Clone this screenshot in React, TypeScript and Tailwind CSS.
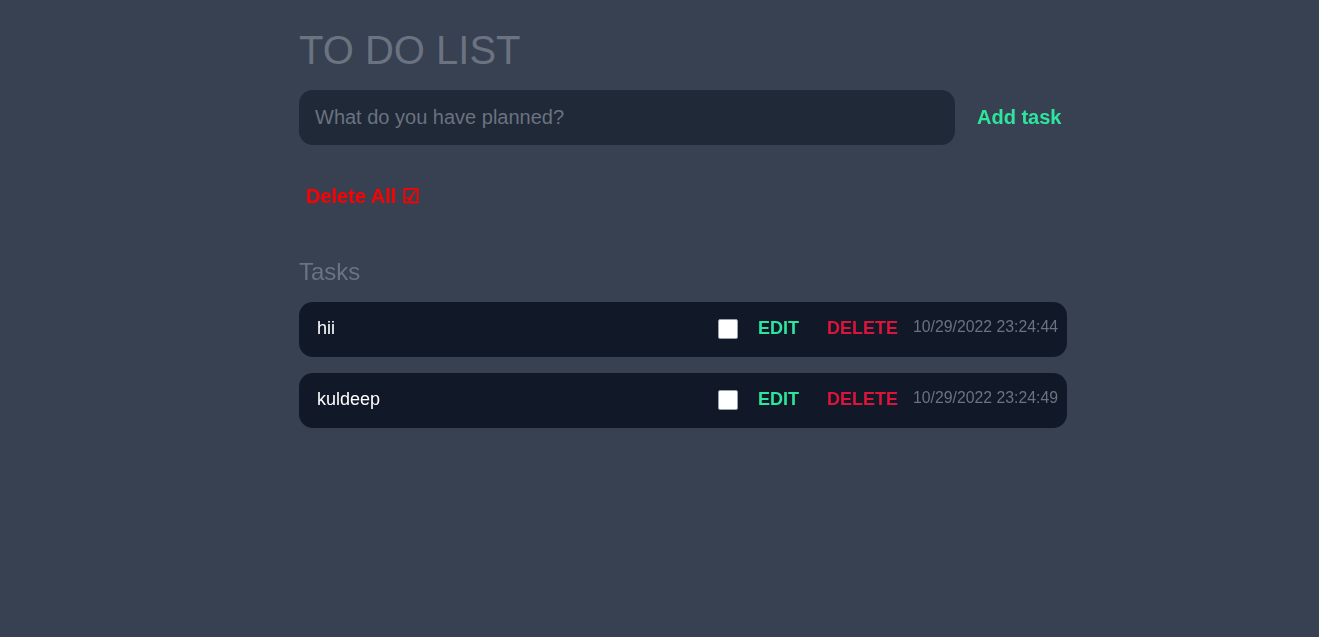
import React, { useState } from 'react';

interface Task {
  id: number;
  text: string;
  createdAt: string;
  done: boolean;
}

const INITIAL_TASKS: Task[] = [
  { id: 1, text: 'hii', createdAt: '10/29/2022 23:24:44', done: false },
  { id: 2, text: 'kuldeep', createdAt: '10/29/2022 23:24:49', done: false },
];

function TaskRow({ task, onToggle, onDelete }: { task: Task; onToggle: () => void; onDelete: () => void }) {
  return (
    <div className="flex items-center h-[55px] rounded-[14px] bg-[#111827] pl-[18px] pr-[9px]">
      <span className="flex-1 -mt-[2px] text-[18px] text-white">{task.text}</span>
      <input
        type="checkbox"
        checked={task.done}
        onChange={onToggle}
        className="w-5 h-5 -mt-[2px] appearance-none bg-white rounded-[2px] border border-gray-400"
      />
      <button className="ml-5 -mt-[3px] text-[18px] font-bold text-[#2ee59d] leading-none">EDIT</button>
      <button onClick={onDelete} className="ml-7 -mt-[3px] text-[18px] font-bold text-[#dc143c] leading-none">
        DELETE
      </button>
      <span className="ml-[15px] -mt-[6px] text-[15.8px] text-[#6b7280]">{task.createdAt}</span>
    </div>
  );
}

export default function App() {
  const [tasks, setTasks] = useState<Task[]>(INITIAL_TASKS);
  const [draft, setDraft] = useState('');

  const addTask = () => {
    if (!draft.trim()) return;
    setTasks([...tasks, { id: Date.now(), text: draft, createdAt: new Date().toLocaleString(), done: false }]);
    setDraft('');
  };

  return (
    <div
      className="min-h-screen bg-[#374151] pl-[47px]"
      style={{ fontFamily: '"Liberation Sans", Arial, sans-serif' }}
    >
      <div className="mx-auto w-[768px] pt-[27px]">
        <h1 className="text-[40px] leading-[46px] text-[#6b7280]">TO DO LIST</h1>

        <div className="mt-[17px] flex items-center">
          <input
            autoFocus
            value={draft}
            onChange={(e) => setDraft(e.target.value)}
            placeholder="What do you have planned?"
            className="w-[656px] h-[55px] rounded-[14px] bg-[#1f2937] pl-4 text-[20px] text-gray-200 placeholder:text-[#6b7280] outline-none"
          />
          <button onClick={addTask} className="ml-[22px] -mt-[2px] text-[20px] font-bold text-[#2ee59d]">
            Add task
          </button>
        </div>

        <button
          onClick={() => setTasks(tasks.filter((t) => !t.done))}
          className="mt-10 ml-[7px] text-[20px] font-bold text-[#ff0000] leading-[23px]"
        >
          Delete All ☑
        </button>

        <h2 className="mt-[48px] text-[24px] leading-[28px] text-[#6b7280]">Tasks</h2>

        <div className="mt-4 flex flex-col gap-4">
          {tasks.map((task) => (
            <TaskRow
              key={task.id}
              task={task}
              onToggle={() => setTasks(tasks.map((t) => (t.id === task.id ? { ...t, done: !t.done } : t)))}
              onDelete={() => setTasks(tasks.filter((t) => t.id !== task.id))}
            />
          ))}
        </div>
      </div>
    </div>
  );
}
